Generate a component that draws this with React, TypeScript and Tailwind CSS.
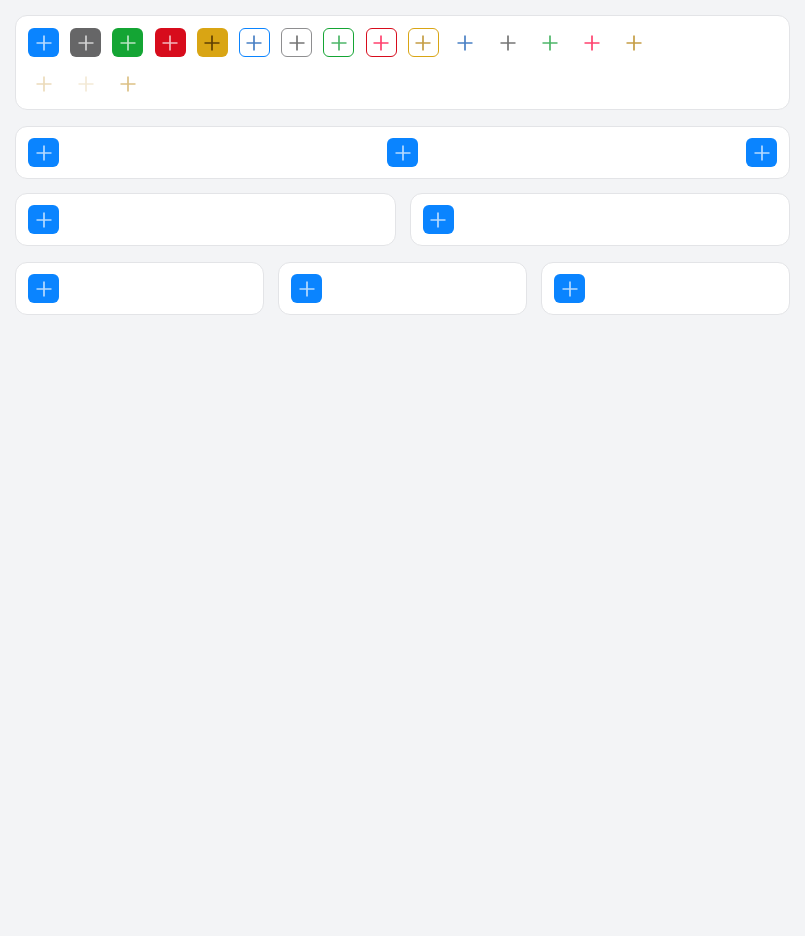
const Plus = ({ color, opacity = 1 }: { color: string; opacity?: number }) => (
  <svg width="16" height="16" viewBox="0 0 16 16" fill="none" style={{ opacity }}>
    <path d="M8 0.5v15M0.5 8h15" stroke={color} strokeWidth="1.7" />
  </svg>
);

type Btn = {
  box: string;
  stroke: string;
  opacity?: number;
};

const row1: Btn[] = [
  { box: 'bg-[#0a84ff]', stroke: '#ffffff', opacity: 0.7 },
  { box: 'bg-[#666667]', stroke: '#ffffff', opacity: 0.7 },
  { box: 'bg-[#14a534]', stroke: '#ffffff', opacity: 0.7 },
  { box: 'bg-[#d70c1c]', stroke: '#ffffff', opacity: 0.7 },
  { box: 'bg-[#d9a514]', stroke: '#4a2e00', opacity: 0.85 },
  { box: 'border border-[#0a84ff] bg-white', stroke: '#3572be', opacity: 0.9 },
  { box: 'border border-[#8e8e90] bg-white', stroke: '#666', opacity: 0.9 },
  { box: 'border border-[#14a534] bg-white', stroke: '#3aae58', opacity: 0.9 },
  { box: 'border border-[#d70c1c] bg-white', stroke: '#ff2d5f', opacity: 0.9 },
  { box: 'border border-[#d9a514] bg-white', stroke: '#bf9330', opacity: 0.9 },
  { box: '', stroke: '#3572be', opacity: 0.9 },
  { box: '', stroke: '#666', opacity: 0.9 },
  { box: '', stroke: '#3aae58', opacity: 0.9 },
  { box: '', stroke: '#ff2d5f', opacity: 0.9 },
  { box: '', stroke: '#bf9330', opacity: 0.9 },
];

// faded / disabled-looking ones
const row2: Btn[] = [
  { box: '', stroke: '#d9b878', opacity: 0.5 },
  { box: '', stroke: '#d9b878', opacity: 0.3 },
  { box: '', stroke: '#d1ac5c', opacity: 0.75 },
];

function IconButton({ b }: { b: Btn }) {
  return (
    <button className={`w-[31px] h-[29px] rounded-md flex items-center justify-center ${b.box}`}>
      <Plus color={b.stroke} opacity={b.opacity} />
    </button>
  );
}

const Primary = () => <IconButton b={row1[0]} />;

const Card = ({ className = '', children }: { className?: string; children: React.ReactNode }) => (
  <div className={`bg-white border border-[#e3e4e7] rounded-xl px-3 ${className}`}>{children}</div>
);

export default function App() {
  return (
    <div className="min-h-[936px] bg-[#f3f4f6] px-[15px] pt-[15px]" style={{ fontFamily: 'Inter, sans-serif' }}>
      {/* Variants */}
      <Card className="pt-3 pb-[11px]">
        <div className="flex flex-col gap-y-[12px]">
          <div className="flex gap-x-[11.2px]">
            {row1.map((b, i) => (
              <IconButton key={i} b={b} />
            ))}
          </div>
          <div className="flex gap-x-[11.2px]">
            {row2.map((b, i) => (
              <IconButton key={i} b={b} />
            ))}
          </div>
        </div>
      </Card>

      {/* Alignment */}
      <Card className="mt-[16px] py-[11px] flex justify-between">
        <Primary />
        <Primary />
        <Primary />
      </Card>

      <div className="mt-[14px] grid grid-cols-2 gap-[14px]">
        <Card className="py-[11px]">
          <Primary />
        </Card>
        <Card className="py-[11px]">
          <Primary />
        </Card>
      </div>

      <div className="mt-[16px] grid grid-cols-3 gap-[14px]">
        <Card className="py-[11px]">
          <Primary />
        </Card>
        <Card className="py-[11px]">
          <Primary />
        </Card>
        <Card className="py-[11px]">
          <Primary />
        </Card>
      </div>
    </div>
  );
}
